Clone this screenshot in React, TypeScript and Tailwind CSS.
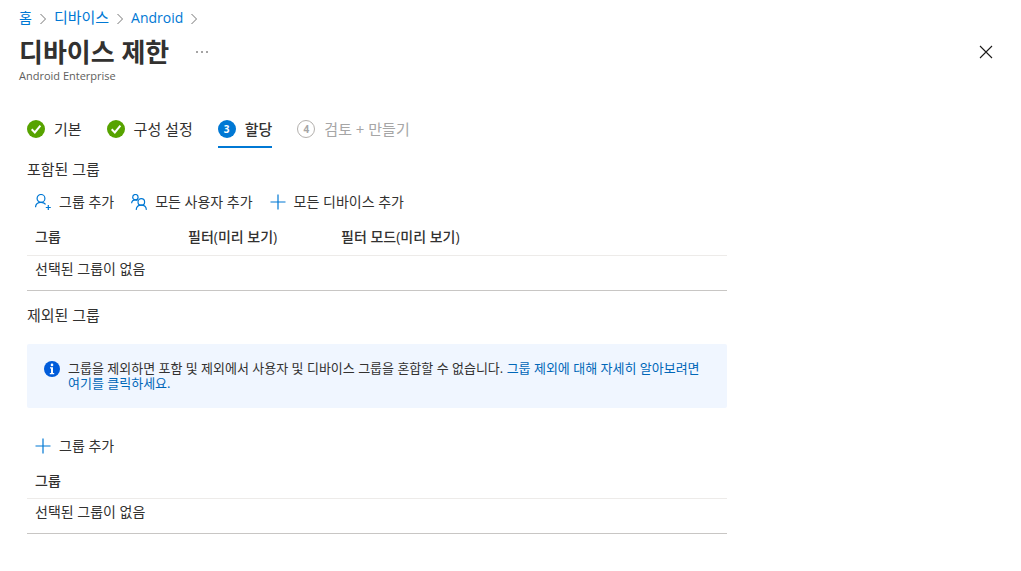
import type { ReactNode } from 'react'

const CrumbArrow = () => (
  <svg className="w-2 h-3 mx-[7px] mt-0.5 shrink-0" viewBox="0 0 8 12" fill="none" stroke="#767676">
    <path d="M1.5 1 L6.5 6 L1.5 11" />
  </svg>
)

const CheckCircle = () => (
  <svg className="w-[18px] h-[18px] shrink-0" viewBox="0 0 18 18" fill="none">
    <circle cx="9" cy="9" r="9" fill="#57a300" />
    <path d="M4.7 9.3 L7.8 12.4 L13.4 5.6" stroke="#fff" strokeWidth="2" />
  </svg>
)

const PlusIcon = () => (
  <svg className="w-4 h-4 shrink-0" viewBox="0 0 16 16" fill="none" stroke="#0078d4" strokeWidth="1.2">
    <path d="M8 0.5 V15.5 M0.5 8 H15.5" />
  </svg>
)

const AddUserIcon = () => (
  <svg className="w-4 h-4 shrink-0" viewBox="0 0 16 16" fill="none" stroke="#0078d4" strokeWidth="1.2">
    <circle cx="6" cy="4.4" r="3.9" />
    <path d="M0.5 13.2 C0.7 10.4 2.9 8.3 6 8.3 C8 8.3 9.6 9.1 10.6 10.4" />
    <path d="M13.3 11 V16 M10.8 13.5 H15.8" />
  </svg>
)

const UsersIcon = () => (
  <svg className="w-4 h-4 shrink-0" viewBox="0 0 16 16" fill="none" stroke="#0078d4" strokeWidth="1.2">
    <circle cx="4.4" cy="3.2" r="2.7" />
    <path d="M0.6 9.2 C0.8 7.2 2.2 5.9 4.4 5.9 C5.2 5.9 5.9 6.1 6.5 6.5" />
    <circle cx="10.3" cy="7.9" r="3.3" />
    <path d="M5.2 15.9 C5.4 13 7.4 11.2 10.3 11.2 C13.2 11.2 15.2 13 15.4 15.9" />
  </svg>
)

const InfoIcon = () => (
  <svg className="w-4 h-4 shrink-0" viewBox="0 0 16 16">
    <circle cx="8" cy="8" r="8" fill="#015cda" />
    <circle cx="8" cy="3.9" r="1.3" fill="#fff" />
    <path d="M6 6.3 H9 V12 H10.2 V13.2 H5.8 V12 H7 V7.5 H6 Z" fill="#fff" />
  </svg>
)

interface StepProps {
  icon: ReactNode
  label: string
  active?: boolean
  disabled?: boolean
}

function Step({ icon, label, active, disabled }: StepProps) {
  return (
    <button
      disabled={disabled}
      className={`flex items-center h-9 gap-[9px] text-[15px] border-b-2 ${
        active ? 'border-[#0078d4] font-medium' : 'border-transparent'
      } ${disabled ? 'text-[#a6a6a6]' : 'text-[#323130]'}`}
    >
      {icon}
      <span>{label}</span>
    </button>
  )
}

function ToolbarButton({ icon, label }: { icon: ReactNode; label: string }) {
  return (
    <button className="flex items-center gap-2 text-sm">
      {icon}
      <span>{label}</span>
    </button>
  )
}

function GroupTable({ columns }: { columns: string[] }) {
  return (
    <table className="w-full table-fixed text-sm text-left border-b border-[#c8c6c4]">
      <thead>
        <tr className="h-[35px] border-b border-[#edebe9]">
          {columns.map((column, i) => (
            <th key={column} className={`px-2 py-0 font-medium ${i < columns.length - 1 ? 'w-[153px]' : ''}`}>
              {column}
            </th>
          ))}
        </tr>
      </thead>
      <tbody>
        <tr className="h-[35px]">
          <td colSpan={columns.length} className="px-2 pt-0 pb-2">선택된 그룹이 없음</td>
        </tr>
      </tbody>
    </table>
  )
}

export default function App() {
  return (
    <div className="min-h-screen bg-white text-[#323130] pt-2 font-['Open_Sans','Noto_Sans_CJK_KR',sans-serif]">
      <header className="pl-[19px] pr-7">
        <nav className="flex items-center h-5 text-sm text-[#0078d4]">
          <a href="#home">홈</a>
          <CrumbArrow />
          <a href="#devices" className="text-[15px]">디바이스</a>
          <CrumbArrow />
          <a href="#android">Android</a>
          <CrumbArrow />
        </nav>
        <div className="flex items-center h-12">
          <h1 className="text-[26px] leading-9 font-bold">디바이스 제한</h1>
          <button aria-label="더 보기" className="ml-[25px] p-0.5">
            <svg className="w-3 h-3" viewBox="0 0 12 12" fill="#323130">
              <circle cx="1" cy="6" r="0.8" />
              <circle cx="6" cy="6" r="0.8" />
              <circle cx="11" cy="6" r="0.8" />
            </svg>
          </button>
          <button aria-label="닫기" className="ml-auto">
            <svg className="w-3.5 h-3.5" viewBox="0 0 14 14" fill="none" stroke="#1b1a19" strokeWidth="1.1">
              <path d="M1 1 L13 13 M13 1 L1 13" />
            </svg>
          </button>
        </div>
        <p className="text-[11px] leading-4 -mt-2 text-[#605e5c]">Android Enterprise</p>
      </header>

      <main className="max-w-[727px] pl-[27px] mt-7">
        <div className="flex gap-[25px]">
          <Step icon={<CheckCircle />} label="기본" />
          <Step icon={<CheckCircle />} label="구성 설정" />
          <Step
            active
            label="할당"
            icon={
              <span className="flex items-center justify-center w-[18px] h-[18px] rounded-full bg-[#0078d4] text-white text-[10px] font-bold">
                3
              </span>
            }
          />
          <Step
            disabled
            label="검토 + 만들기"
            icon={
              <span className="flex items-center justify-center w-[18px] h-[18px] rounded-full border border-[#b3b0ad] text-[10px] font-bold">
                4
              </span>
            }
          />
        </div>

        <h2 className="mt-[11px] text-[15px] leading-5">포함된 그룹</h2>
        <div className="flex items-center gap-[17px] h-9 mt-[5px] pl-2">
          <ToolbarButton icon={<AddUserIcon />} label="그룹 추가" />
          <ToolbarButton icon={<UsersIcon />} label="모든 사용자 추가" />
          <ToolbarButton icon={<PlusIcon />} label="모든 디바이스 추가" />
        </div>
        <GroupTable columns={['그룹', '필터(미리 보기)', '필터 모드(미리 보기)']} />

        <h2 className="mt-3.5 text-[15px] leading-5">제외된 그룹</h2>
        <div className="flex gap-2 mt-[19px] px-[17px] py-[17px] rounded-xs bg-[#f0f6ff]">
          <InfoIcon />
          <p className="text-[13px] leading-[15px]">
            그룹을 제외하면 포함 및 제외에서 사용자 및 디바이스 그룹을 혼합할 수 없습니다.{' '}
            <a href="#learn" className="text-[#0067b8]">그룹 제외에 대해 자세히 알아보려면 여기를 클릭하세요.</a>
          </p>
        </div>
        <div className="flex items-center h-9 mt-5 pl-2">
          <ToolbarButton icon={<PlusIcon />} label="그룹 추가" />
        </div>
        <GroupTable columns={['그룹']} />
      </main>
    </div>
  )
}
